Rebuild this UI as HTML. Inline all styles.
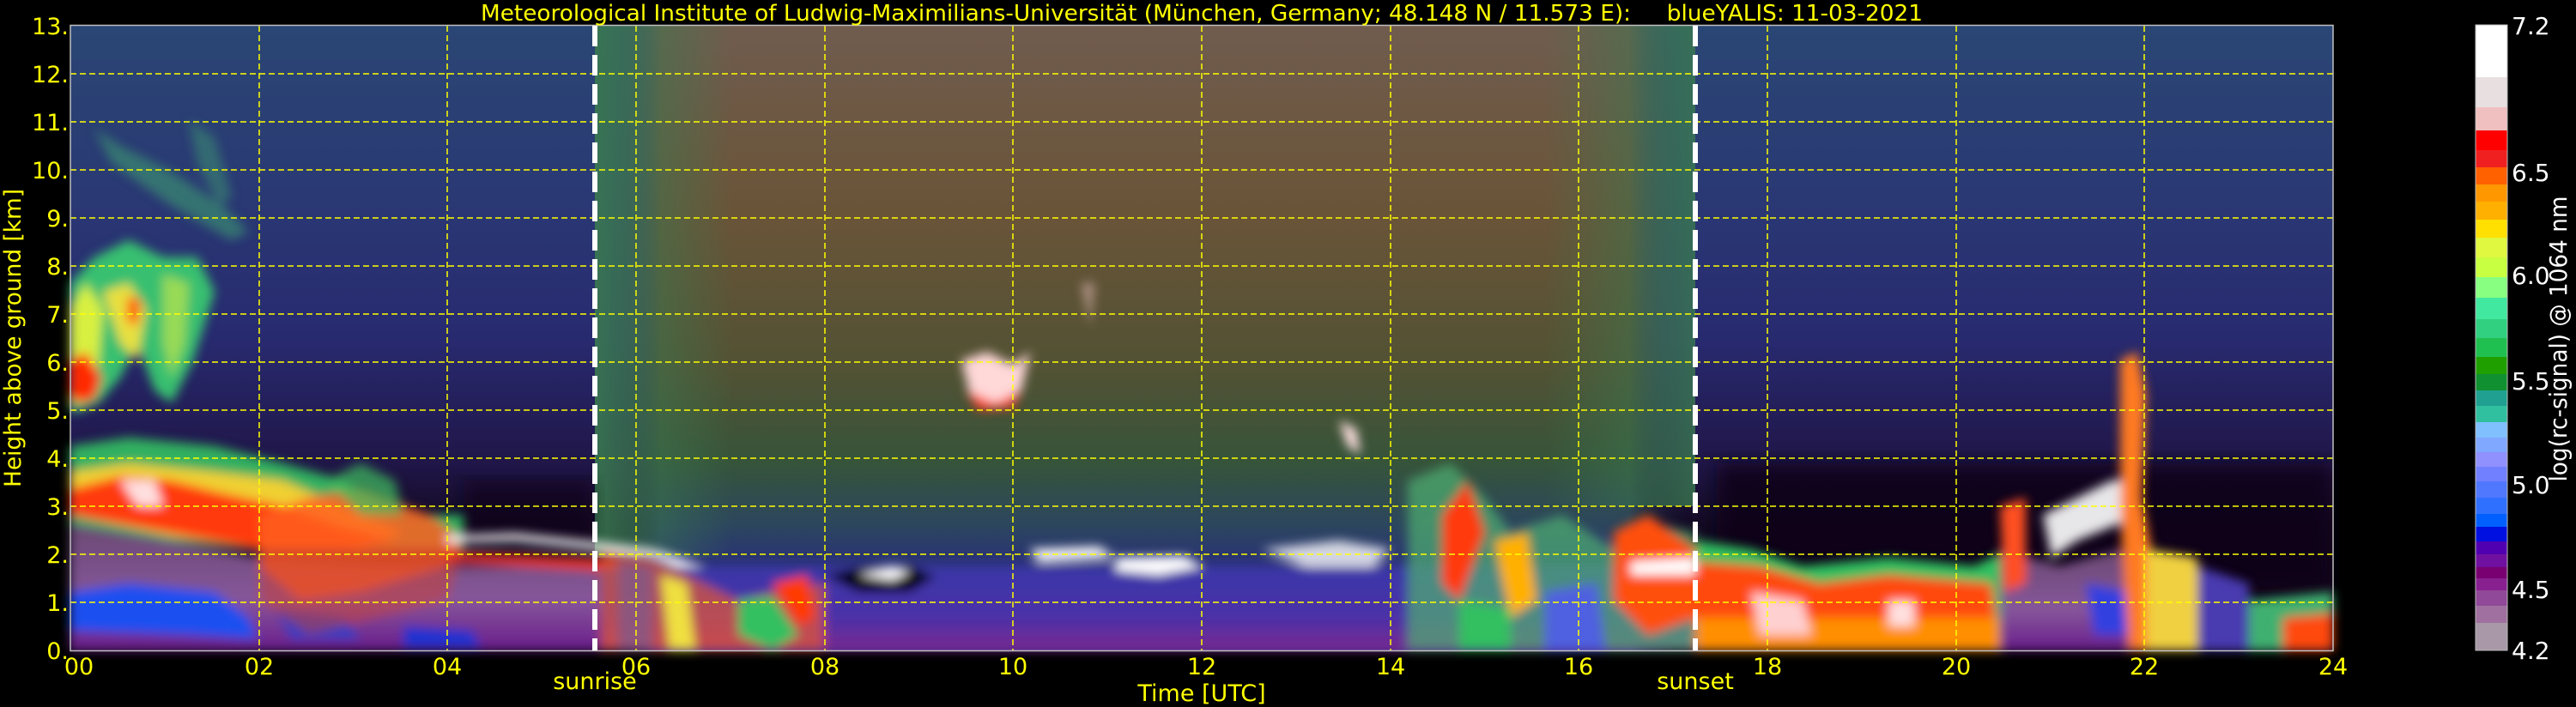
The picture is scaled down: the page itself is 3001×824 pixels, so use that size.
<!DOCTYPE html>
<html><head><meta charset="utf-8"><style>
html,body{margin:0;padding:0;background:#000;}
svg{display:block;}
text{font-family:"DejaVu Sans","Liberation Sans",sans-serif;}
</style></head><body>
<svg width="3001" height="824" viewBox="0 0 3001 824" xmlns="http://www.w3.org/2000/svg">
<defs>
<linearGradient id="night" x1="0" y1="0" x2="0" y2="1">
<stop offset="0" stop-color="#2a4674"/><stop offset="0.25" stop-color="#2a3a74"/>
<stop offset="0.5" stop-color="#282a70"/><stop offset="0.7" stop-color="#201648"/>
<stop offset="0.8" stop-color="#140a24"/><stop offset="1" stop-color="#0e0618"/>
</linearGradient>
<linearGradient id="day" x1="0" y1="0" x2="0" y2="1">
<stop offset="0" stop-color="#705c4e"/><stop offset="0.3" stop-color="#6a5438"/>
<stop offset="0.55" stop-color="#525234"/><stop offset="0.7" stop-color="#36543a"/>
<stop offset="0.8" stop-color="#2c465e"/><stop offset="0.86" stop-color="#2a3276"/>
<stop offset="1" stop-color="#4a2a88"/>
</linearGradient>
<linearGradient id="dayfade" x1="0" y1="0" x2="1" y2="0">
<stop offset="0" stop-color="#000" stop-opacity="0"/><stop offset="0.06" stop-color="#fff"/>
<stop offset="0.94" stop-color="#fff"/><stop offset="1" stop-color="#000" stop-opacity="0"/>
</linearGradient>
<mask id="dm"><rect x="693" y="30" width="1282" height="728" fill="url(#dayfade)"/></mask>
<linearGradient id="edgeg" x1="0" y1="0" x2="1" y2="0">
<stop offset="0" stop-color="#3a7a50" stop-opacity="0.9"/><stop offset="1" stop-color="#3a7a50" stop-opacity="0"/>
</linearGradient>
<linearGradient id="edgeg2" x1="1" y1="0" x2="0" y2="0">
<stop offset="0" stop-color="#3a7a50" stop-opacity="0.8"/><stop offset="1" stop-color="#3a7a50" stop-opacity="0"/>
</linearGradient>
<linearGradient id="pbl" x1="0" y1="0" x2="0" y2="1">
<stop offset="0" stop-color="#6a4a72"/><stop offset="0.6" stop-color="#86569a"/><stop offset="1" stop-color="#6a1c8c"/>
</linearGradient>
<linearGradient id="pblday" x1="0" y1="0" x2="0" y2="1">
<stop offset="0" stop-color="#3a38a8"/><stop offset="0.6" stop-color="#4a30a8"/><stop offset="1" stop-color="#7a2a90"/>
</linearGradient>
<filter id="b4" x="-5%" y="-5%" width="110%" height="110%"><feGaussianBlur stdDeviation="6"/></filter>
<filter id="b10"><feGaussianBlur stdDeviation="10"/></filter>
</defs>

<rect x="82" y="30" width="2636" height="728" fill="url(#night)"/>
<g mask="url(#dm)"><rect x="693" y="30" width="1282" height="728" fill="url(#day)"/></g>
<rect x="693" y="30" width="160" height="620" fill="url(#edgeg)"/>
<rect x="1800" y="30" width="175" height="560" fill="url(#edgeg2)"/>
<rect x="2000" y="540" width="718" height="150" fill="#0c0614" opacity="0.8" filter="url(#b10)"/>
<rect x="540" y="560" width="150" height="70" fill="#0c0614" opacity="0.6" filter="url(#b10)"/>

<g filter="url(#b4)">
<path d="M110,150 L140,170 L200,200 L260,240 L290,270 L270,280 L200,240 L130,190 Z" fill="#3c9a70" opacity="0.6"/>
<path d="M220,140 L250,160 L270,230 L255,240 L230,190 Z" fill="#3c9a70" opacity="0.5"/>
<path d="M82,330 L110,300 L150,280 L190,300 L230,300 L250,340 L225,420 L200,470 L180,455 L160,400 L140,440 L115,470 L90,480 L82,480 Z" fill="#38c070"/>
<path d="M82,360 L100,330 L120,360 L115,420 L100,470 L82,470 Z" fill="#d8f040"/>
<path d="M120,340 L150,330 L170,360 L160,420 L140,400 Z" fill="#e8e040"/>
<path d="M82,420 L100,410 L118,440 L110,465 L90,470 L82,460 Z" fill="#ff2a00"/>
<path d="M148,345 L165,350 L160,380 L148,375 Z" fill="#ff6000"/>
<path d="M190,320 L220,330 L215,400 L200,440 L190,400 Z" fill="#b0e050" opacity="0.8"/>
<path d="M82,520 L150,510 L250,520 L330,540 L400,560 L460,600 L540,600 L540,640 L400,640 L300,640 L200,630 L82,620 Z" fill="#30b060"/>
<path d="M82,550 L150,540 L250,550 L330,560 L420,600 L470,620 L420,640 L300,640 L200,625 L82,600 Z" fill="#f0d030"/>
<path d="M82,570 L140,555 L200,560 L260,575 L330,590 L400,615 L460,630 L400,640 L300,640 L200,622 L82,600 Z" fill="#ff3a10"/>
<path d="M140,560 L180,560 L190,590 L160,590 Z" fill="#ffe0e0"/>
<path d="M82,610 L200,630 L300,650 L450,660 L700,660 L700,758 L82,758 Z" fill="url(#pbl)"/>
<path d="M82,690 L150,680 L250,690 L290,720 L300,745 L220,740 L82,735 Z" fill="#1e50f0"/>
<path d="M320,710 L400,720 L420,745 L340,745 Z" fill="#2040d0" opacity="0.8"/>
<path d="M470,730 L550,735 L560,755 L470,755 Z" fill="#1a30d0"/>
<path d="M302,600 L360,580 L420,570 L500,600 L540,630 L520,660 L420,690 L350,700 L302,660 Z" fill="#ff6020" opacity="0.85"/>
<path d="M380,560 L420,540 L460,560 L470,600 L420,600 Z" fill="#40c060" opacity="0.7"/>
<path d="M302,640 L540,640 L520,700 L440,720 L360,740 L302,700 Z" fill="#d04030" opacity="0.5"/>
<path d="M520,632 L600,630 L693,640 L760,648 L800,666 L840,690 L860,705 L880,700 L860,680 L820,660 L760,640 L693,632 L600,622 L520,625 Z" fill="#ffffff"/>
<path d="M520,642 L693,650 L760,660 L800,680 L780,700 L693,665 L520,655 Z" fill="#ff3a20" opacity="0.8"/>
<rect x="700" y="660" width="1280" height="98" fill="url(#pblday)"/>
<path d="M700,640 L760,650 L800,670 L860,700 L900,690 L960,680 L960,758 L700,758 Z" fill="#ff6020" opacity="0.6"/>
<path d="M770,670 L800,680 L810,758 L780,758 Z" fill="#f0e040"/>
<path d="M860,700 L900,695 L930,740 L900,758 L860,740 Z" fill="#30c060"/>
<path d="M900,680 L940,670 L950,720 L930,730 Z" fill="#ff3a00"/>
<path d="M720,650 L760,660 L760,758 L720,758 Z" fill="#7a5a90" opacity="0.7"/>
<path d="M961,670 L1000,662 L1060,660 L1090,672 L1060,690 L1000,690 Z" fill="#000"/>
<path d="M1000,670 L1040,660 L1060,666 L1040,676 Z" fill="#fff"/>
<path d="M1200,640 L1280,637 L1300,650 L1210,655 Z" fill="#ffffff"/>
<path d="M1300,650 L1380,648 L1400,660 L1350,670 L1300,665 Z" fill="#ffffff"/>
<path d="M1470,640 L1560,630 L1620,640 L1600,660 L1520,660 Z" fill="#ffffff" opacity="0.8"/>
<path d="M1120,420 L1150,410 L1180,425 L1200,410 L1190,455 L1160,470 L1130,460 Z" fill="#ffd8d8"/>
<path d="M1125,455 L1160,470 L1190,455 L1180,475 L1140,478 Z" fill="#ff4020"/>
<path d="M1560,490 L1580,500 L1585,530 L1570,520 Z" fill="#ffe0e0"/>
<path d="M1260,330 L1275,330 L1270,380 Z" fill="#e8c0c0" opacity="0.6"/>
<path d="M1640,560 L1690,540 L1730,580 L1760,620 L1820,600 L1880,640 L1920,610 L1975,620 L1975,758 L1640,758 Z" fill="#50b070" opacity="0.7"/>
<path d="M1680,600 L1710,560 L1730,620 L1700,700 L1680,680 Z" fill="#ff3a10"/>
<path d="M1740,630 L1780,620 L1790,700 L1760,720 Z" fill="#ffb000"/>
<path d="M1880,620 L1920,600 L1975,640 L1975,720 L1920,740 L1880,700 Z" fill="#ff5010"/>
<path d="M1700,700 L1760,710 L1760,758 L1700,758 Z" fill="#30c060"/>
<path d="M1800,690 L1860,680 L1870,758 L1800,758 Z" fill="#5060e0"/>
<path d="M1900,655 L1975,650 L1975,670 L1900,670 Z" fill="#ffffff"/>
<path d="M1975,630 L2040,640 L2100,660 L2200,650 L2300,660 L2340,640 L2340,758 L1975,758 Z" fill="#30c060"/>
<path d="M1975,655 L2050,660 L2120,680 L2200,670 L2320,680 L2330,758 L1975,758 Z" fill="#ff4a10"/>
<path d="M1975,720 L2330,720 L2330,758 L1975,758 Z" fill="#ffa000" opacity="0.8"/>
<path d="M2040,690 L2100,700 L2110,740 L2050,740 Z" fill="#ffd0d0"/>
<path d="M2200,700 L2230,700 L2230,730 L2200,730 Z" fill="#ffe0e0"/>
<path d="M2330,640 L2400,660 L2470,640 L2500,700 L2500,758 L2330,758 Z" fill="url(#pbl)"/>
<path d="M2430,680 L2480,690 L2490,740 L2440,740 Z" fill="#3040e0"/>
<path d="M2330,590 L2360,580 L2360,680 L2335,690 Z" fill="#ff5020"/>
<path d="M2380,600 L2420,580 L2460,560 L2480,560 L2470,610 L2420,630 L2390,650 Z" fill="#ffffff" opacity="0.9"/>
<path d="M2470,420 L2490,410 L2500,460 L2495,580 L2510,660 L2520,758 L2480,758 L2470,600 Z" fill="#ff7a20"/>
<path d="M2500,640 L2560,650 L2560,758 L2500,758 Z" fill="#f0d040"/>
<path d="M2560,660 L2620,680 L2620,758 L2560,758 Z" fill="#4a3ab0"/>
<path d="M2620,700 L2718,690 L2718,758 L2620,758 Z" fill="#40b070"/>
<path d="M2660,720 L2718,715 L2718,758 L2660,758 Z" fill="#ff4a10"/>
</g>

<g stroke="#ffff00" stroke-width="1.5" stroke-dasharray="7,4" fill="none">
<path d="M82,86H2718M82,142H2718M82,198H2718M82,254H2718M82,310H2718M82,366H2718M82,422H2718M82,478H2718M82,534H2718M82,590H2718M82,646H2718M82,702H2718"/>
<path d="M302,30V758M521,30V758M741,30V758M961,30V758M1180,30V758M1400,30V758M1620,30V758M1839,30V758M2059,30V758M2279,30V758M2498,30V758"/>
</g>
<rect x="82" y="29.5" width="2636" height="729" fill="none" stroke="#c0c0c0" stroke-width="1.5"/>
<g stroke="#ffffff" stroke-width="6" stroke-dasharray="24,10">
<path d="M693,30V758M1975,30V758"/>
</g>

<g fill="#ffff00" font-size="27">
<text x="1400" y="24" text-anchor="middle" textLength="1680" lengthAdjust="spacingAndGlyphs" font-size="26" xml:space="preserve">Meteorological Institute of Ludwig-Maximilians-Universität (München, Germany; 48.148 N / 11.573 E):     blueYALIS: 11-03-2021</text>
<g text-anchor="end">
<text x="80" y="40">13.</text><text x="80" y="96">12.</text><text x="80" y="152">11.</text><text x="80" y="208">10.</text>
<text x="80" y="264">9.</text><text x="80" y="320">8.</text><text x="80" y="376">7.</text><text x="80" y="432">6.</text>
<text x="80" y="488">5.</text><text x="80" y="544">4.</text><text x="80" y="600">3.</text><text x="80" y="656">2.</text>
<text x="80" y="712">1.</text><text x="80" y="768">0.</text>
</g>
<g text-anchor="middle">
<text x="92" y="786">00</text><text x="302" y="786">02</text><text x="521" y="786">04</text><text x="741" y="786">06</text>
<text x="961" y="786">08</text><text x="1180" y="786">10</text><text x="1400" y="786">12</text><text x="1620" y="786">14</text>
<text x="1839" y="786">16</text><text x="2059" y="786">18</text><text x="2279" y="786">20</text><text x="2498" y="786">22</text>
<text x="2718" y="786">24</text>
<text x="693" y="803">sunrise</text><text x="1975" y="803">sunset</text>
<text x="1400" y="817">Time [UTC]</text>
</g>
<text transform="translate(24,394) rotate(-90)" text-anchor="middle" textLength="348" lengthAdjust="spacingAndGlyphs">Height above ground [km]</text>
</g>

<g>
<rect x="2884" y="29" width="37" height="61" fill="#ffffff"/>
<rect x="2884" y="90" width="37" height="35" fill="#e8e0e0"/>
<rect x="2884" y="125" width="37" height="27" fill="#f0c0c0"/>
<rect x="2884" y="152" width="37" height="23" fill="#ff0000"/>
<rect x="2884" y="175" width="37" height="20" fill="#f02020"/>
<rect x="2884" y="195" width="37" height="20" fill="#ff6000"/>
<rect x="2884" y="215" width="37" height="20" fill="#ff9800"/>
<rect x="2884" y="235" width="37" height="21" fill="#ffb000"/>
<rect x="2884" y="256" width="37" height="21" fill="#ffe000"/>
<rect x="2884" y="277" width="37" height="23" fill="#e0f840"/>
<rect x="2884" y="300" width="37" height="23" fill="#c8ff40"/>
<rect x="2884" y="323" width="37" height="24" fill="#88ff80"/>
<rect x="2884" y="347" width="37" height="25" fill="#40e8a0"/>
<rect x="2884" y="372" width="37" height="22" fill="#30d080"/>
<rect x="2884" y="394" width="37" height="22" fill="#20c050"/>
<rect x="2884" y="416" width="37" height="20" fill="#20a000"/>
<rect x="2884" y="436" width="37" height="19" fill="#109030"/>
<rect x="2884" y="455" width="37" height="18" fill="#20a090"/>
<rect x="2884" y="473" width="37" height="19" fill="#30c0a0"/>
<rect x="2884" y="492" width="37" height="18" fill="#80c0ff"/>
<rect x="2884" y="510" width="37" height="17" fill="#80a8ff"/>
<rect x="2884" y="527" width="37" height="17" fill="#9090ff"/>
<rect x="2884" y="544" width="37" height="17" fill="#7080ff"/>
<rect x="2884" y="561" width="37" height="19" fill="#5078ff"/>
<rect x="2884" y="580" width="37" height="19" fill="#3070ff"/>
<rect x="2884" y="599" width="37" height="15" fill="#0060ff"/>
<rect x="2884" y="614" width="37" height="17" fill="#0010e0"/>
<rect x="2884" y="631" width="37" height="15" fill="#5000b0"/>
<rect x="2884" y="646" width="37" height="15" fill="#7010a0"/>
<rect x="2884" y="661" width="37" height="13" fill="#780070"/>
<rect x="2884" y="674" width="37" height="14" fill="#882090"/>
<rect x="2884" y="688" width="37" height="18" fill="#904898"/>
<rect x="2884" y="706" width="37" height="20" fill="#a070a0"/>
<rect x="2884" y="726" width="37" height="32" fill="#a898a8"/>
<rect x="2884" y="29" width="37" height="729" fill="none" stroke="#bbbbbb" stroke-width="1"/>
</g>
<g fill="#ffffff" font-size="28">
<text x="2926" y="40">7.2</text><text x="2926" y="211">6.5</text><text x="2926" y="331">6.0</text>
<text x="2926" y="454">5.5</text><text x="2926" y="575">5.0</text><text x="2926" y="697">4.5</text>
<text x="2926" y="768">4.2</text>
<text transform="translate(2990,395) rotate(-90)" text-anchor="middle" textLength="333" lengthAdjust="spacingAndGlyphs" font-size="28">log(rc-signal) @ 1064 nm</text>
</g>
</svg>
</body></html>
